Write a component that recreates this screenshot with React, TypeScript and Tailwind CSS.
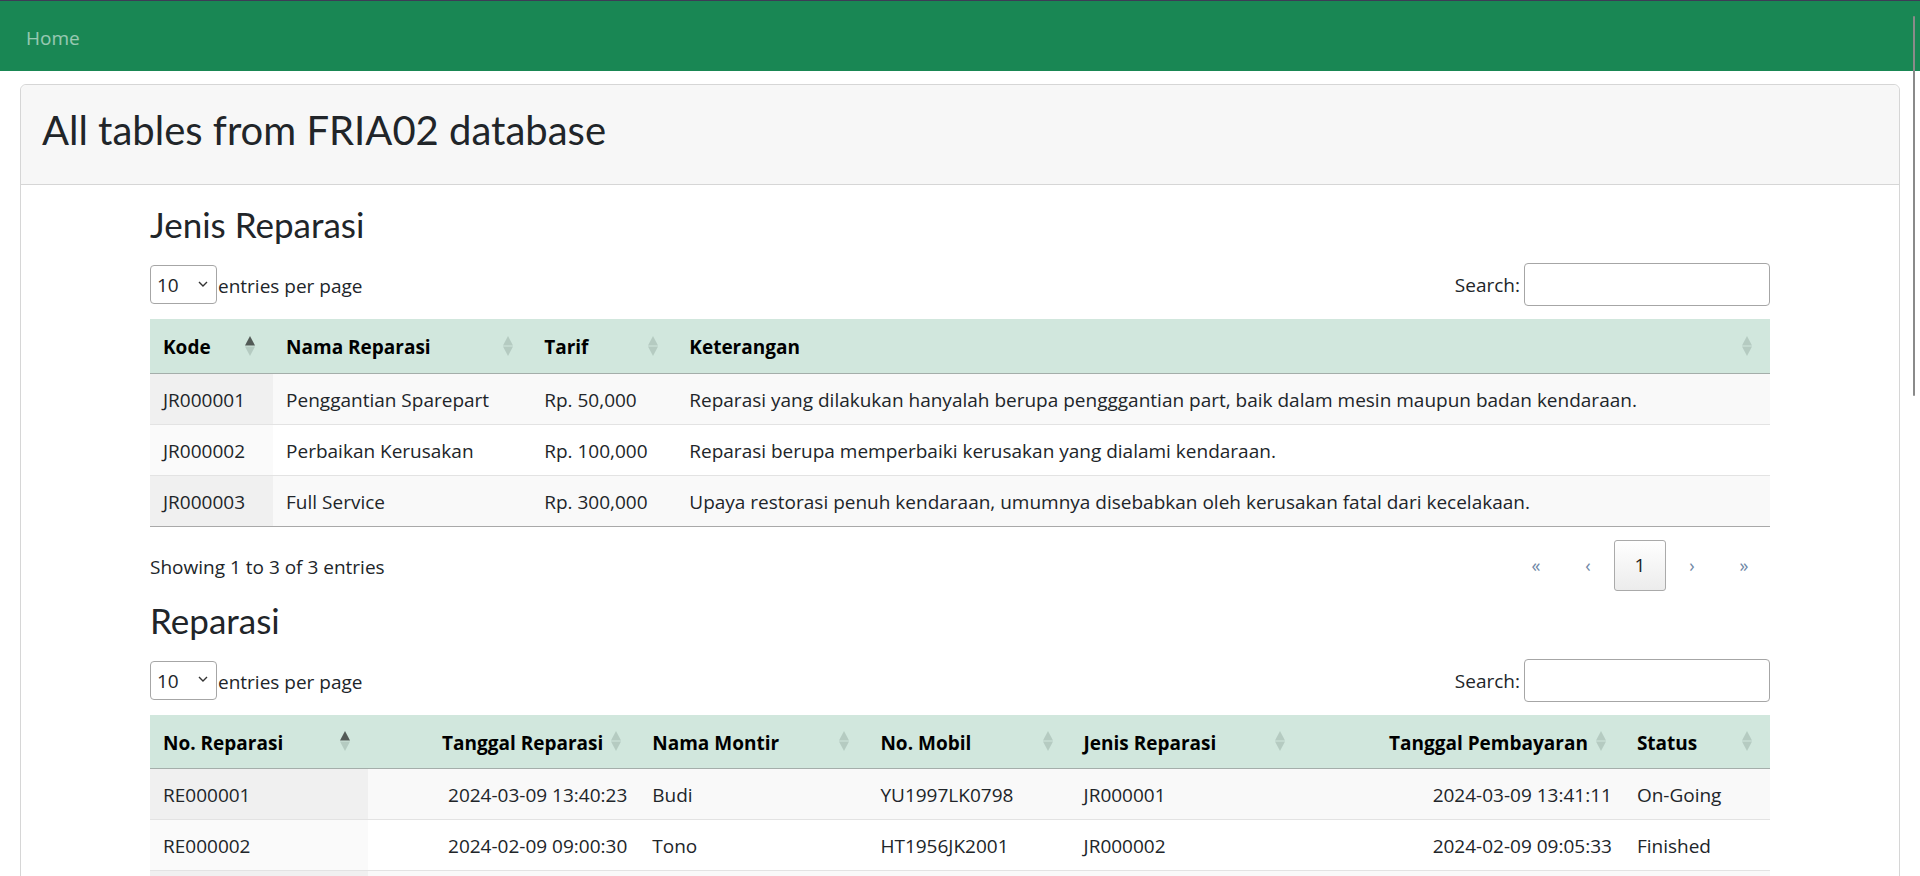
import React from 'react';

type Col = { label: string; w: string; right?: boolean; sorted?: boolean };

const jenisCols: Col[] = [
  { label: 'Kode', w: 'w-[123px]', sorted: true },
  { label: 'Nama Reparasi', w: 'w-[258px]' },
  { label: 'Tarif', w: 'w-[145px]' },
  { label: 'Keterangan', w: 'w-[1093px]' },
];

const jenisRows = [
  ['JR000001', 'Penggantian Sparepart', 'Rp. 50,000', 'Reparasi yang dilakukan hanyalah berupa pengggantian part, baik dalam mesin maupun badan kendaraan.'],
  ['JR000002', 'Perbaikan Kerusakan', 'Rp. 100,000', 'Reparasi berupa memperbaiki kerusakan yang dialami kendaraan.'],
  ['JR000003', 'Full Service', 'Rp. 300,000', 'Upaya restorasi penuh kendaraan, umumnya disebabkan oleh kerusakan fatal dari kecelakaan.'],
];

const reparasiCols: Col[] = [
  { label: 'No. Reparasi', w: 'w-[218px]', sorted: true },
  { label: 'Tanggal Reparasi', w: 'w-[271px]', right: true },
  { label: 'Nama Montir', w: 'w-[228px]' },
  { label: 'No. Mobil', w: 'w-[203px]' },
  { label: 'Jenis Reparasi', w: 'w-[232px]' },
  { label: 'Tanggal Pembayaran', w: 'w-[321px]', right: true },
  { label: 'Status', w: 'w-[146px]' },
];

// third row only peeks in at the bottom edge of the window
const reparasiRows = [
  ['RE000001', '2024-03-09 13:40:23', 'Budi', 'YU1997LK0798', 'JR000001', '2024-03-09 13:41:11', 'On-Going'],
  ['RE000002', '2024-02-09 09:00:30', 'Tono', 'HT1956JK2001', 'JR000002', '2024-02-09 09:05:33', 'Finished'],
  ['', '', '', '', '', '', ''],
];

const SortIcon = ({ active }: { active?: boolean }) => (
  <svg width="10" height="20" viewBox="0 0 10 20" className="shrink-0">
    <path d="M5 0 L10 9.4 L0 9.4 Z" fill={active ? '#525a56' : '#b5cbc1'} />
    <path d="M0 10.6 L10 10.6 L5 20 Z" fill="#b5cbc1" />
  </svg>
);

const Controls = () => (
  <div className="flex items-center justify-between mt-[18px]">
    <div className="flex items-center gap-[1px]">
      <div className="w-[67px] h-[39px] border border-[#a6a6a6] rounded-[4px] flex items-center justify-between pl-[6px] pr-[8px] text-[#212529]">
        <span className="pt-[2px]">10</span>
        <svg width="10" height="6" viewBox="0 0 10 6" className="mb-[2px]">
          <path d="M1 1 L5 5 L9 1" fill="none" stroke="#333" strokeWidth="1.4" />
        </svg>
      </div>
      <span className="pt-[4px]">entries per page</span>
    </div>
    <div className="flex items-center gap-[4px]">
      <span className="pt-[2px]">Search:</span>
      <input className="w-[246px] h-[43px] border border-[#a6a6a6] rounded-[4px] bg-white" />
    </div>
  </div>
);

const DataTable = ({ cols, rows }: { cols: Col[]; rows: string[][] }) => (
  <table className="w-full table-fixed mt-[13px]">
    <colgroup>
      {cols.map((c) => (
        <col key={c.label} className={c.w} />
      ))}
    </colgroup>
    <thead>
      <tr>
        {cols.map((c) => (
          <th key={c.label} className="h-[54px] p-0 bg-[#d1e7dd] border-b border-[#a4aeaa] font-bold text-black">
            <div
              className={
                c.right
                  ? 'flex items-center justify-end gap-[8px] pr-[18px]'
                  : 'flex items-center justify-between pl-[13px] pr-[18px]'
              }
            >
              <span className="pt-[3px]">{c.label}</span>
              <SortIcon active={c.sorted} />
            </div>
          </th>
        ))}
      </tr>
    </thead>
    <tbody>
      {rows.map((r, i) => (
        <tr key={i}>
          {r.map((v, j) => (
            <td
              key={j}
              className={`h-[51px] pt-[3px] pb-0 whitespace-nowrap border-b ${
                i === rows.length - 1 ? 'border-[#a9a9a9]' : 'border-[#e3e3e3]'
              } ${cols[j].right ? 'text-right pr-[12px] pl-[13px]' : 'text-left px-[13px]'} ${
                i % 2 === 0 ? (j === 0 ? 'bg-[#f0f0f0]' : 'bg-[#f9f9f9]') : j === 0 ? 'bg-[#fafafa]' : 'bg-white'
              }`}
            >
              {v}
            </td>
          ))}
        </tr>
      ))}
    </tbody>
  </table>
);

const Footer = ({ total }: { total: number }) => (
  <div className="flex items-center justify-between mt-[13px]">
    <span className="pt-[5px]">Showing 1 to {total} of {total} entries</span>
    <div className="flex items-center text-[#7088a6] text-[18px]">
      <span className="w-[52px] h-[51px] flex items-center justify-center">«</span>
      <span className="w-[52px] h-[51px] flex items-center justify-center">‹</span>
      <span className="w-[52px] h-[51px] flex items-center justify-center border border-[#aaaaaa] rounded-[3px] bg-gradient-to-b from-white to-[#ececec] text-[#222] text-[19px]">1</span>
      <span className="w-[52px] h-[51px] flex items-center justify-center">›</span>
      <span className="w-[52px] h-[51px] flex items-center justify-center">»</span>
    </div>
  </div>
);

export default function App() {
  return (
    <div className="relative h-[876px] overflow-hidden bg-white font-['Open_Sans',sans-serif] text-[19px] text-[#212529]">
      <nav className="h-[71px] bg-[#198754] border-t border-[#3d3b56] flex items-center pl-[26px] pt-[4px]">
        <span className="text-white/55">Home</span>
      </nav>

      <div className="mx-[20px] mt-[13px] border border-[#d6d6d6] rounded-[6px]">
        <div className="h-[100px] bg-[#f7f7f7] border-b border-[#d6d6d6] rounded-t-[6px] pl-[21px] pt-[21px]">
          <h1 className="font-['Lato',sans-serif] text-[40px] leading-[1.2] text-[#212529]">All tables from FRIA02 database</h1>
        </div>

        <div className="w-[1620px] mx-auto pt-[18px] pb-10">
          <h2 className="font-['Lato',sans-serif] text-[35px] leading-[1.2]">Jenis Reparasi</h2>
          <Controls />
          <DataTable cols={jenisCols} rows={jenisRows} />
          <Footer total={3} />

          <h2 className="font-['Lato',sans-serif] text-[35px] leading-[1.2] mt-[8px]">Reparasi</h2>
          <Controls />
          <DataTable cols={reparasiCols} rows={reparasiRows} />
        </div>
      </div>

      <div className="absolute right-[5px] top-[16px] w-[2px] h-[380px] bg-[#8a8a8a] rounded-full" />
    </div>
  );
}
